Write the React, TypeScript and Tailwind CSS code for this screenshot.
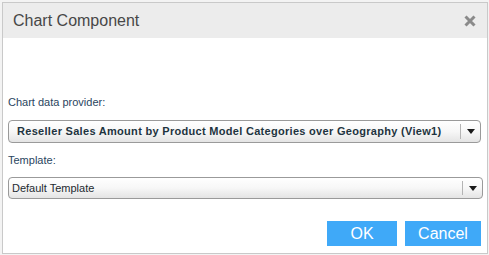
function Caret() {
  return (
    <svg width="8" height="5" viewBox="0 0 8 5" className="block">
      <path d="M0 0h8L4 5z" fill="#1a1a1a" />
    </svg>
  );
}

function Select({
  text,
  bold,
  className,
}: {
  text: string;
  bold?: boolean;
  className: string;
}) {
  return (
    <div
      className={
        "flex items-stretch rounded-[4px] border border-[#9a9a9a] bg-gradient-to-b from-white via-[#f7f7f7] to-[#e4e4e4] " +
        className
      }
    >
      <div
        className={
          bold
            ? "flex flex-1 items-center whitespace-nowrap pl-[8px] text-[11px] font-bold tracking-[0.3px] text-[#1e3440]"
            : "flex flex-1 items-center whitespace-nowrap pl-[3px] text-[11px] text-[#1e2a30]"
        }
      >
        {text}
      </div>
      <div className="my-[3px] w-px bg-[#b4b4b4]" />
      <div className="flex w-[19px] items-center justify-center">
        <Caret />
      </div>
    </div>
  );
}

export default function App() {
  return (
    <div
      className="h-[255px] w-[489px] bg-[#f3f3f3] pl-[2px] pt-[2px]"
      style={{ fontFamily: '"Liberation Sans", Arial, sans-serif' }}
    >
      <div className="flex h-[252px] w-[486px] flex-col border border-[#c9c9c9] bg-white">
        <div className="flex h-[35px] items-center justify-between bg-[#ececec] pl-[10px] pr-[11px]">
          <span className="text-[16px] text-[#474747]">Chart Component</span>
          <svg width="12" height="12" viewBox="0 0 12 12">
            <path d="M1.5 1.5l9 9M10.5 1.5l-9 9" stroke="#8a8a8a" strokeWidth="3" />
          </svg>
        </div>

        <div className="flex flex-1 flex-col px-[5px] pt-[58px]">
          <div className="text-[11px] leading-[13px] text-[#2a4560]">Chart data provider:</div>
          <Select
            className="mt-[11px] h-[23px] w-[473px]"
            bold
            text="Reseller Sales Amount by Product Model Categories over Geography (View1)"
          />

          <div className="mt-[11px] text-[11px] leading-[13px] text-[#2a4560]">Template:</div>
          <Select className="mt-[10px] h-[22px] w-[475px]" text="Default Template" />

          <div className="mt-[22px] flex justify-end gap-[8px] pr-[1px]">
            <button className="h-[25px] w-[70px] bg-[#3fa9f8] text-[16px] text-white">OK</button>
            <button className="h-[25px] w-[76px] bg-[#3fa9f8] text-[16px] text-white">Cancel</button>
          </div>
        </div>
      </div>
    </div>
  );
}
